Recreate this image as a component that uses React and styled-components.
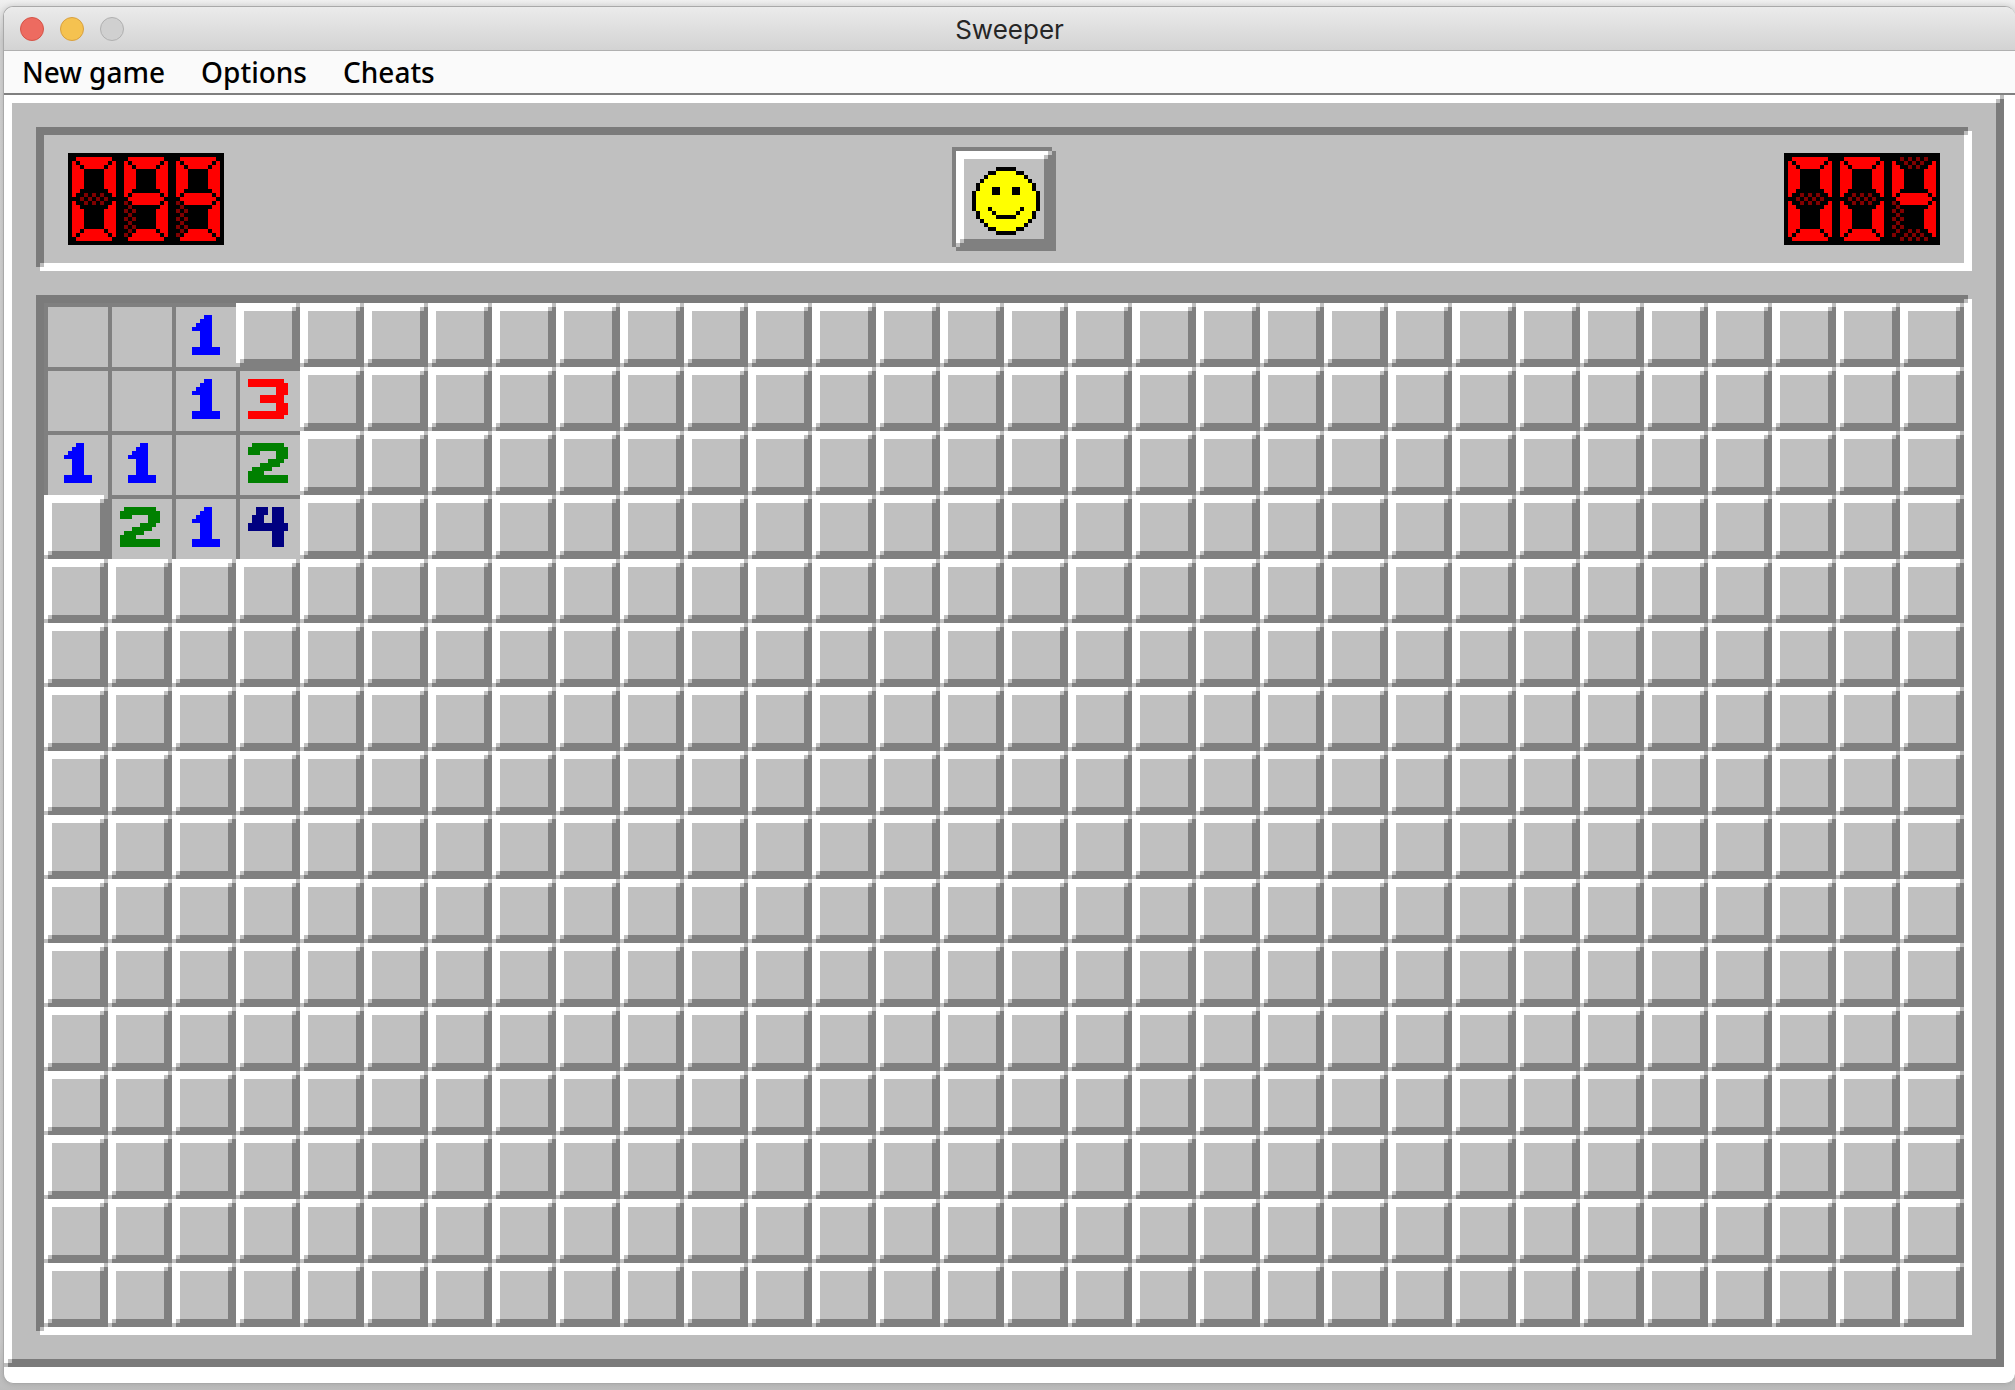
import React from "react";
import styled, { createGlobalStyle, css } from "styled-components";

const UNIT = 4;

const GlobalStyle = createGlobalStyle`
  *, *::before, *::after { box-sizing: border-box; }
  body {
    margin: 0;
    min-height: 100vh;
    background: linear-gradient(#f0f0f0, #d2d2d2 40px, #cecece 1340px, #bcbcbc);
    font-family: Inter, "Liberation Sans", sans-serif;
  }
  #root { display: flow-root; }
`;

const patch = (color, place, size) =>
  `linear-gradient(${color}, ${color}) ${place} / ${size} no-repeat`;

// Two-tone edge, 8px thick, whose meeting corners are stepped in 4px squares.
const bevel = ({ start, end, step, outside, fill }) => css`
  background:
    ${[
      patch(outside, "right 0 top 0", "4px 4px"),
      patch(step, "right 4px top 4px", "4px 4px"),
      patch(end, "right 0 top 4px", "4px 4px"),
      patch(outside, "left 0 bottom 0", "4px 4px"),
      patch(step, "left 4px bottom 4px", "4px 4px"),
      patch(end, "left 4px bottom 0", "4px 4px"),
      patch(start, "left 0 top 0", "100% 8px"),
      patch(start, "left 0 top 0", "8px 100%"),
      patch(end, "left 0 bottom 0", "100% 8px"),
      patch(end, "right 0 top 0", "8px 100%"),
    ].join(", ")},
    ${fill};
`;

const raisedFrame = bevel({ start: "#fff", end: "#7b7b7b", step: "#bdbdbd", outside: "#bdbdbd", fill: "#bdbdbd" });
const sunkenFrame = bevel({ start: "#7b7b7b", end: "#fff", step: "#bdbdbd", outside: "#bdbdbd", fill: "#c0c0c0" });
const raisedTile = bevel({ start: "#fff", end: "#808080", step: "#c0c0c0", outside: "#c0c0c0", fill: "#c0c0c0" });

const Window = styled.div`
  margin: 6px 0 6px 3px;
  padding-bottom: 16px;
  border: 1px solid #a9a9a9;
  border-right: 0;
  border-radius: 10px;
  background: #fff;
  overflow: hidden;
  box-shadow: 0 0 6px rgba(0, 0, 0, 0.15);
`;

const TitleBar = styled.header`
  display: grid;
  grid-template-columns: 1fr auto 1fr;
  align-items: center;
  height: 44px;
  padding: 1px 16px 0;
  border-bottom: 1px solid #b0b0b0;
  background: linear-gradient(#ebebeb, #d3d3d3);
`;

const Lights = styled.div`
  display: flex;
  gap: 16px;
`;

const Light = styled.button`
  width: 24px;
  height: 24px;
  padding: 0;
  border: 1px solid ${(p) => p.$edge};
  border-radius: 50%;
  background: ${(p) => p.$fill};
`;

const Title = styled.h1`
  margin: 0;
  padding-top: 2px;
  color: #262626;
  font-size: 26px;
  font-weight: 400;
  line-height: 32px;
`;

const MenuBar = styled.nav`
  display: flex;
  align-items: center;
  gap: 36px;
  height: 44px;
  padding: 0 18px;
  border-bottom: 2px solid #808080;
  background: #fafafa;
`;

const MenuItem = styled.button`
  padding: 0;
  border: 0;
  background: none;
  color: #000;
  font-family: "Noto Sans", sans-serif;
  font-size: 28px;
  font-weight: 500;
  line-height: 40px;
`;

const Game = styled.main`
  display: flex;
  flex-direction: column;
  gap: 24px;
  width: fit-content;
  padding: 32px;
  ${raisedFrame}
`;

const ScorePanel = styled.section`
  display: flex;
  align-items: center;
  justify-content: space-between;
  padding: 20px 32px;
  ${sunkenFrame}
`;

const Field = styled.section`
  display: grid;
  grid-template-columns: repeat(30, 64px);
  grid-auto-rows: 64px;
  padding: 8px;
  ${sunkenFrame}
`;

const Cell = styled.button`
  display: block;
  padding: 0;
  border: 0;
  ${raisedTile}
  ${(p) => p.$open && css`
    border: solid #808080;
    border-width: 4px 0 0 4px;
    background: #c0c0c0;
  `}
`;

const FaceButton = styled.button`
  display: grid;
  place-items: center;
  width: 104px;
  height: 104px;
  padding: 4px;
  border: 0;
  background:
    ${patch("#c0c0c0", "right 0 top 0", "4px 4px")},
    ${patch("#c0c0c0", "left 0 bottom 0", "4px 4px")},
    #808080;
`;

const FaceTile = styled.span`
  display: grid;
  place-items: center;
  width: 96px;
  height: 96px;
  ${raisedTile}
`;

const Readout = styled.div`
  display: flex;
  background: #000;
`;

const Pixels = styled.svg`
  display: block;
  shape-rendering: crispEdges;
`;

// A run is [row, first column, last column].
const runsToPath = (runs) =>
  runs.map(([y, a, b]) => `M${a} ${y}h${b - a + 1}v1h${a - b - 1}z`).join("");

const rows = (from, to, a, b) =>
  Array.from({ length: to - from + 1 }, (_, i) => [from + i, a, b]);

const NUMBERS = {
  1: {
    color: "#0000ff",
    runs: [[3, 8, 9], [4, 7, 9], [5, 6, 9], [6, 5, 9], ...rows(7, 10, 7, 9), ...rows(11, 12, 5, 11)],
  },
  2: {
    color: "#008000",
    runs: [[3, 4, 11], [4, 3, 12], [5, 3, 5], [5, 10, 12], [6, 10, 12], [7, 8, 11], [8, 6, 10], [9, 4, 8], [10, 3, 6], ...rows(11, 12, 3, 12)],
  },
  3: {
    color: "#ff0000",
    runs: [[3, 3, 11], [4, 3, 12], ...rows(5, 6, 10, 12), ...rows(7, 8, 6, 11), ...rows(9, 10, 10, 12), [11, 3, 12], [12, 3, 11]],
  },
  4: {
    color: "#000080",
    runs: [...rows(3, 4, 5, 7), ...rows(5, 6, 4, 6), ...rows(3, 6, 9, 11), ...rows(7, 8, 3, 12), ...rows(9, 12, 9, 11)],
  },
};

const SEGMENTS = {
  a: { parity: 0, runs: [[1, 2, 10], [2, 3, 9], [3, 4, 8]] },
  b: { parity: 1, runs: [[2, 11, 11], [3, 10, 11], ...rows(4, 8, 9, 11), [9, 10, 11], [10, 11, 11]] },
  c: { parity: 1, runs: [[12, 11, 11], [13, 10, 11], ...rows(14, 18, 9, 11), [19, 10, 11], [20, 11, 11]] },
  d: { parity: 0, runs: [[19, 4, 8], [20, 3, 9], [21, 2, 10]] },
  e: { parity: 1, runs: [[12, 1, 1], [13, 1, 2], ...rows(14, 18, 1, 3), [19, 1, 2], [20, 1, 1]] },
  f: { parity: 1, runs: [[2, 1, 1], [3, 1, 2], ...rows(4, 8, 1, 3), [9, 1, 2], [10, 1, 1]] },
  g: { parity: 0, runs: [[10, 3, 9], [11, 2, 10], [12, 3, 9]] },
};

const LIT = { 0: "abcdef", 4: "bcfg", 9: "abcdfg" };

const dither = ({ parity, runs }) =>
  runs.flatMap(([y, a, b]) =>
    Array.from({ length: b - a + 1 }, (_, i) => [y, a + i, a + i]).filter(
      ([, x]) => (x + y) % 2 === parity
    )
  );

function LedDigit({ value }) {
  return (
    <Pixels width={13 * UNIT} height={23 * UNIT} viewBox="0 0 13 23" aria-hidden="true">
      {Object.entries(SEGMENTS).map(([name, segment]) => {
        const lit = LIT[value].includes(name);
        return (
          <path
            key={name}
            fill={lit ? "#ff0000" : "#800000"}
            d={runsToPath(lit ? segment.runs : dither(segment))}
          />
        );
      })}
    </Pixels>
  );
}

function Counter({ value, label }) {
  return (
    <Readout role="img" aria-label={`${label}: ${value}`}>
      {[...value].map((digit, i) => (
        <LedDigit key={i} value={digit} />
      ))}
    </Readout>
  );
}

const FACE_FILL = [
  [0, 6, 10], [1, 4, 12], [2, 3, 13], [3, 2, 14], ...rows(4, 5, 1, 15), ...rows(6, 10, 0, 16),
  ...rows(11, 12, 1, 15), [13, 2, 14], [14, 3, 13], [15, 4, 12], [16, 6, 10],
];

const FACE_LINES = [
  [0, 6, 10], [1, 4, 5], [1, 11, 12], [2, 3, 3], [2, 13, 13], [3, 2, 2], [3, 14, 14],
  ...rows(4, 5, 1, 1), ...rows(4, 5, 15, 15), ...rows(6, 10, 0, 0), ...rows(6, 10, 16, 16),
  ...rows(11, 12, 1, 1), ...rows(11, 12, 15, 15), [13, 2, 2], [13, 14, 14], [14, 3, 3], [14, 13, 13],
  [15, 4, 5], [15, 11, 12], [16, 6, 10],
  ...rows(5, 6, 5, 6), ...rows(5, 6, 10, 11),
  [10, 4, 4], [10, 12, 12], [11, 5, 5], [11, 11, 11], [12, 6, 10],
];

function Smiley() {
  return (
    <Pixels width={20 * UNIT} height={20 * UNIT} viewBox="-2 -2 20 20" aria-hidden="true">
      <path fill="#ffff00" d={runsToPath(FACE_FILL)} />
      <path fill="#000" d={runsToPath(FACE_LINES)} />
    </Pixels>
  );
}

// "#" is a covered square, "." an open empty one.
const BOARD = ["..1#", "..13", "11.2", "#214"]
  .map((row) => row.padEnd(30, "#"))
  .concat(Array(12).fill("#".repeat(30)));

function Square({ mark, row, column }) {
  const number = NUMBERS[mark];
  const state = mark === "#" ? "covered" : mark === "." ? "empty" : mark;
  return (
    <Cell type="button" $open={mark !== "#"} aria-label={`Row ${row}, column ${column}: ${state}`}>
      {number && (
        <Pixels width={15 * UNIT} height={15 * UNIT} viewBox="1 1 15 15" aria-hidden="true">
          <path fill={number.color} d={runsToPath(number.runs)} />
        </Pixels>
      )}
    </Cell>
  );
}

export default function App() {
  return (
    <>
      <GlobalStyle />
      <Window>
        <TitleBar>
          <Lights>
            <Light type="button" aria-label="Close" $fill="#ed6b60" $edge="#d55448" />
            <Light type="button" aria-label="Minimize" $fill="#f5c250" $edge="#d8a040" />
            <Light type="button" aria-label="Zoom" disabled $fill="#d0d0d0" $edge="#b0b0b0" />
          </Lights>
          <Title>Sweeper</Title>
        </TitleBar>
        <MenuBar>
          <MenuItem type="button">New game</MenuItem>
          <MenuItem type="button">Options</MenuItem>
          <MenuItem type="button">Cheats</MenuItem>
        </MenuBar>
        <Game>
          <ScorePanel>
            <Counter value="099" label="Mines left" />
            <FaceButton type="button" aria-label="Restart">
              <FaceTile>
                <Smiley />
              </FaceTile>
            </FaceButton>
            <Counter value="004" label="Seconds" />
          </ScorePanel>
          <Field aria-label="Minefield">
            {BOARD.map((line, y) =>
              [...line].map((mark, x) => (
                <Square key={`${y}-${x}`} mark={mark} row={y + 1} column={x + 1} />
              ))
            )}
          </Field>
        </Game>
      </Window>
    </>
  );
}
